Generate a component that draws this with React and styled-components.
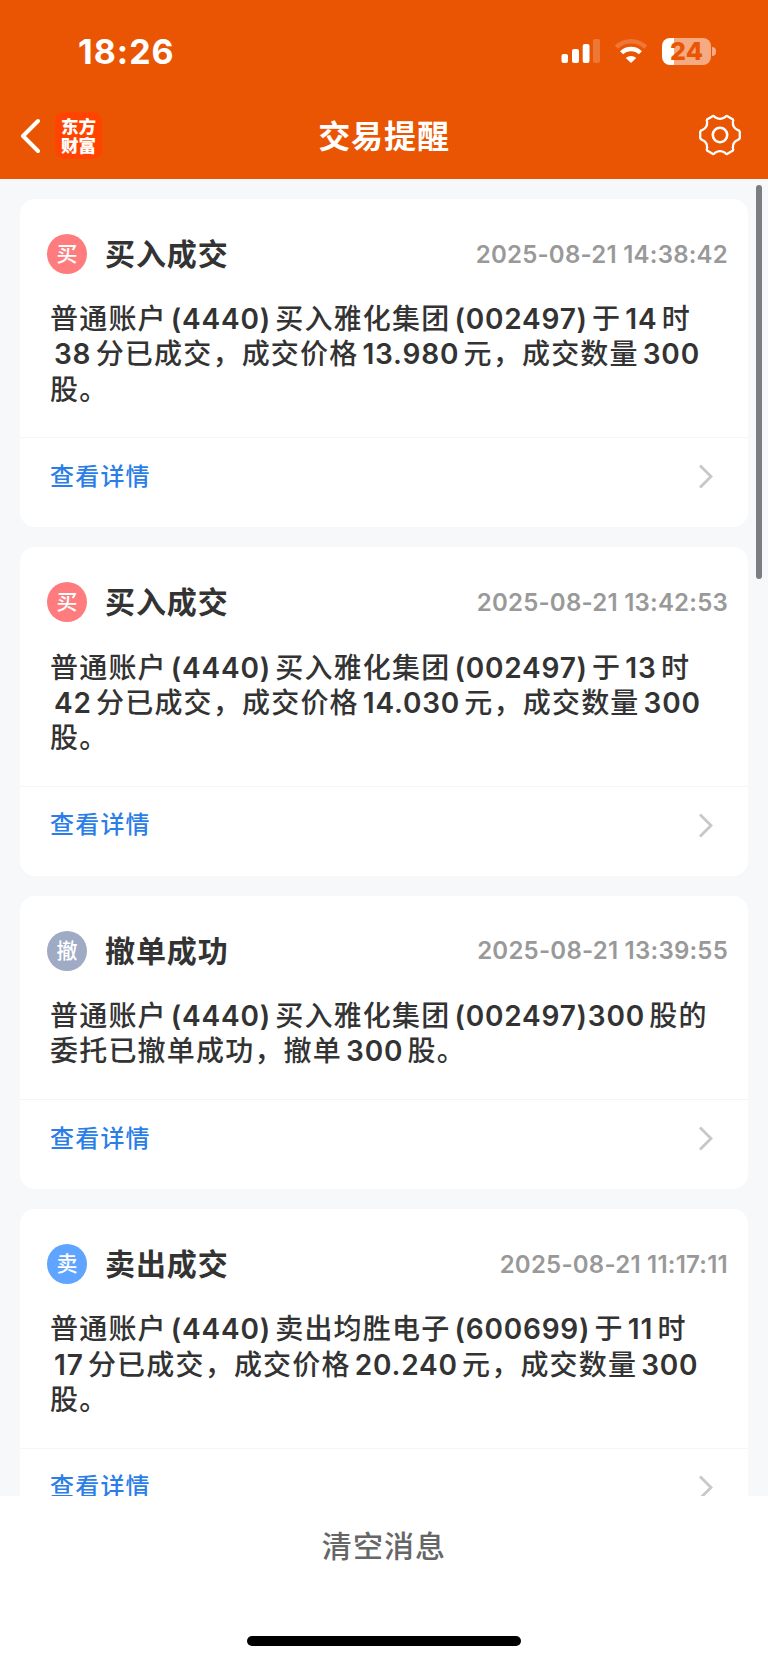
import React from 'react'
import styled, { createGlobalStyle } from 'styled-components'

const GlobalStyle = createGlobalStyle`
  * {
    box-sizing: border-box;
  }
  body {
    margin: 0;
    background: #f7f8fa;
    font-family: Inter, 'Noto Sans CJK SC', sans-serif;
    text-autospace: no-autospace;
    text-spacing-trim: space-all;
  }
`

const messages = [
  {
    kind: 'buy',
    mark: '买',
    title: '买入成交',
    time: '2025-08-21 14:38:42',
    lines: ['普通账户(4440)买入雅化集团(002497)于14时', '38分已成交，成交价格13.980元，成交数量300', '股。'],
  },
  {
    kind: 'buy',
    mark: '买',
    title: '买入成交',
    time: '2025-08-21 13:42:53',
    lines: ['普通账户(4440)买入雅化集团(002497)于13时', '42分已成交，成交价格14.030元，成交数量300', '股。'],
  },
  {
    kind: 'cancel',
    mark: '撤',
    title: '撤单成功',
    time: '2025-08-21 13:39:55',
    lines: ['普通账户(4440)买入雅化集团(002497)300股的', '委托已撤单成功，撤单300股。'],
  },
  {
    kind: 'sell',
    mark: '卖',
    title: '卖出成交',
    time: '2025-08-21 11:17:11',
    lines: ['普通账户(4440)卖出均胜电子(600699)于11时', '17分已成交，成交价格20.240元，成交数量300', '股。'],
  },
]

const markColors = {
  buy: '#ff7c7e',
  cancel: '#9fabc4',
  sell: '#5fa5ff',
}

const SignalIcon = () => (
  <svg width="39" height="26" viewBox="0 0 39 26" fill="#fff">
    <rect x="0.5" y="16" width="6.5" height="9" rx="2" />
    <rect x="11" y="11" width="7" height="14" rx="2" />
    <rect x="21.7" y="6" width="6.8" height="19" rx="2" />
    <rect x="32" y="1" width="7" height="24" rx="2" opacity="0.2" />
  </svg>
)

const WifiIcon = () => (
  <svg width="34" height="26" viewBox="0 0 34 26" fill="none" stroke="#fff">
    <path d="M2.4 9.2 A21 21 0 0 1 31.6 9.2" strokeWidth="4.6" opacity="0.2" />
    <path d="M7.6 14.8 A13.4 13.4 0 0 1 26.4 14.8" strokeWidth="4.4" />
    <path d="M17 25 L11.8 20 A7.6 7.6 0 0 1 22.2 20 Z" fill="#fff" stroke="none" />
  </svg>
)

const GearIcon = () => (
  <svg width="42" height="42" viewBox="-21 -21 42 42" fill="none" stroke="#fff" strokeWidth="2.3" strokeLinejoin="round">
    <path d="M-7 -19 Q-6 -19.2 -5 -17.8 Q0 -14.6 5 -17.8 Q6 -19.2 7 -19 L13 -15.4 Q13.6 -14.6 12.9 -13.2 Q12.4 -7.4 17.6 -5 Q19.4 -4.8 19.8 -3 L19.8 3 Q19.4 4.8 17.6 5 Q12.4 7.4 12.9 13.2 Q13.6 14.6 13 15.4 L7 19 Q6 19.2 5 17.8 Q0 14.6 -5 17.8 Q-6 19.2 -7 19 L-13 15.4 Q-13.6 14.6 -12.9 13.2 Q-12.4 7.4 -17.6 5 Q-19.4 4.8 -19.8 3 L-19.8 -3 Q-19.4 -4.8 -17.6 -5 Q-12.4 -7.4 -12.9 -13.2 Q-13.6 -14.6 -13 -15.4 Z" />
    <circle r="7.2" strokeWidth="2.6" />
  </svg>
)

const Message = ({ item }) => (
  <Card>
    <CardHead>
      <Mark $kind={item.kind}>{item.mark}</Mark>
      <CardTitle>{item.title}</CardTitle>
      <Time>{item.time}</Time>
    </CardHead>
    <Body>
      {item.lines.map((line) => (
        <Line key={line}>
          {line.split(/([\d().]+)/).filter(Boolean).map((part, i) =>
            /\d/.test(part) ? <Num key={i}>{part}</Num> : part
          )}
        </Line>
      ))}
    </Body>
    <Detail>
      <DetailLink>查看详情</DetailLink>
      <svg width="15" height="25" viewBox="0 0 15 25" fill="none" stroke="#c8c8c8" strokeWidth="2.8">
        <path d="M2 1.5 L13 12.5 L2 23.5" />
      </svg>
    </Detail>
  </Card>
)

const App = () => {
  return (
    <Screen>
      <GlobalStyle />
      <Header>
        <StatusBar>
          <Clock>18:26</Clock>
          <StatusIcons>
            <SignalIcon />
            <WifiIcon />
            <Battery>
              <BatteryBody>24</BatteryBody>
              <BatteryTip />
            </Battery>
          </StatusIcons>
        </StatusBar>
        <NavBar>
          <NavSide>
            <svg width="20" height="36" viewBox="0 0 20 36" fill="none" stroke="#fff" strokeWidth="4" strokeLinecap="round" strokeLinejoin="round">
              <path d="M18 3 L3 18 L18 33" />
            </svg>
            <Logo>
              <span>东方</span>
              <span>财富</span>
            </Logo>
          </NavSide>
          <PageTitle>交易提醒</PageTitle>
          <NavSide $end>
            <GearIcon />
          </NavSide>
        </NavBar>
      </Header>
      <List>
        {messages.map((item) => (
          <Message key={item.time} item={item} />
        ))}
        <ScrollThumb />
      </List>
      <Footer>
        <ClearButton>清空消息</ClearButton>
        <HomeBar />
      </Footer>
    </Screen>
  )
}

const Screen = styled.div`
  width: 768px;
  height: 1663px;
  display: flex;
  flex-direction: column;
  overflow: hidden;
`
const Header = styled.header`
  height: 179px;
  flex: none;
  background: #ea5504;
  color: #fff;
`
const StatusBar = styled.div`
  height: 92px;
  padding: 10px 52px 0 78px;
  display: flex;
  align-items: center;
  justify-content: space-between;
`
const Clock = styled.div`
  padding-top: 1px;
  font-size: 34px;
  font-weight: 700;
  line-height: 40px;
  letter-spacing: 1px;
`
const StatusIcons = styled.div`
  display: flex;
  align-items: center;
  gap: 14px;
`
const Battery = styled.div`
  display: flex;
  align-items: center;
  gap: 1px;
`
const BatteryBody = styled.div`
  width: 49px;
  height: 27px;
  border-radius: 8px;
  background: linear-gradient(to right, #fff 12px, #f5aa81 12px);
  color: #ea5504;
  font-size: 25px;
  font-weight: 800;
  line-height: 27px;
  text-align: center;
`
const BatteryTip = styled.div`
  width: 4px;
  height: 9px;
  border-radius: 0 4px 4px 0;
  background: #f5aa81;
`
const NavBar = styled.div`
  height: 87px;
  padding: 0 20px;
  display: grid;
  grid-template-columns: 1fr auto 1fr;
  align-items: center;
`
const NavSide = styled.div`
  display: flex;
  align-items: center;
  justify-content: ${(props) => (props.$end ? 'flex-end' : 'flex-start')};
  gap: 15px;
  padding: ${(props) => (props.$end ? '0 7px 2px 0' : '0')};
`
const Logo = styled.div`
  width: 47px;
  height: 47px;
  border-radius: 9px;
  background: #ff4400;
  display: flex;
  flex-direction: column;
  align-items: center;
  justify-content: center;
  font-size: 17.5px;
  font-weight: 900;
  line-height: 19px;
`
const PageTitle = styled.h1`
  margin: 0;
  padding-top: 2px;
  font-size: 32px;
  font-weight: 700;
  line-height: 40px;
  letter-spacing: 0.9px;
`
const List = styled.main`
  position: relative;
  flex: none;
  height: 1317px;
  padding: 20px;
  display: flex;
  flex-direction: column;
  gap: 20px;
  overflow: hidden;
  background: #f7f8fa;
`
const Card = styled.section`
  flex: none;
  border-radius: 15px;
  background: #fff;
`
const CardHead = styled.div`
  height: 102px;
  padding: 8px 20px 0 27px;
  display: flex;
  align-items: center;
`
const Mark = styled.div`
  width: 40px;
  height: 40px;
  border-radius: 50%;
  background: ${(props) => markColors[props.$kind]};
  color: #fff;
  font-size: 21px;
  font-weight: 500;
  line-height: 39px;
  text-align: center;
`
const CardTitle = styled.h2`
  margin: 0 auto 0 18px;
  color: #333;
  font-size: 30px;
  font-weight: 700;
  line-height: 40px;
  letter-spacing: 0.9px;
`
const Time = styled.time`
  color: #999;
  font-size: 24px;
  font-weight: 600;
  letter-spacing: 0.23px;
`
const Body = styled.div`
  padding: 1.2px 0 29.4px 30px;
  border-bottom: 1px solid #f4f5f7;
  color: #333;
  font-size: 28px;
  font-weight: 500;
  letter-spacing: 1.2px;
`
const Line = styled.p`
  margin: 0;
  height: 35.3px;
  line-height: 35.3px;
  white-space: nowrap;
`
const Num = styled.span`
  margin: 0 4.3px 0 4px;
  font-weight: 600;
  letter-spacing: 0.8px;
`
const Detail = styled.div`
  height: 89px;
  padding: 0 35px 12px 30px;
  display: flex;
  align-items: center;
  justify-content: space-between;
`
const DetailLink = styled.a`
  color: #2b7ee8;
  font-size: 24px;
  font-weight: 500;
  line-height: 34px;
  letter-spacing: 1.2px;
`
const ScrollThumb = styled.div`
  position: absolute;
  top: 6px;
  right: 6px;
  width: 6px;
  height: 394px;
  border-radius: 3px;
  background: #7c7d80;
`
const Footer = styled.footer`
  flex: 1;
  display: flex;
  flex-direction: column;
  align-items: center;
  justify-content: space-between;
  padding: 30px 0 17px;
  background: #fff;
`
const ClearButton = styled.button`
  border: none;
  padding: 0;
  background: none;
  color: #666;
  font-family: inherit;
  font-size: 30px;
  font-weight: 500;
  line-height: 40px;
  letter-spacing: 1.1px;
`
const HomeBar = styled.div`
  width: 274px;
  height: 10px;
  border-radius: 5px;
  background: #000;
`

export default App
